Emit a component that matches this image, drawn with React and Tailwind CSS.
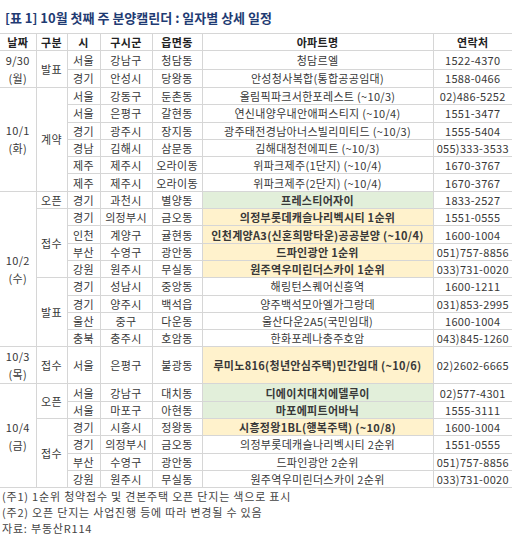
const groups = [
  {
    date: "9/30",
    day: "(월)",
    parts: [
      {
        kind: "발표",
        rows: [
          ["서울", "강남구", "청담동", "청담르엘", "1522-4370"],
          ["경기", "안성시", "당왕동", "안성청사복합(통합공공임대)", "1588-0466"],
        ],
      },
    ],
  },
  {
    date: "10/1",
    day: "(화)",
    parts: [
      {
        kind: "계약",
        rows: [
          ["서울", "강동구", "둔촌동", "올림픽파크서한포레스트 (~10/3)", "02)486-5252"],
          ["서울", "은평구", "갈현동", "연신내양우내안애퍼스티지 (~10/4)", "1551-3477"],
          ["경기", "광주시", "장지동", "광주태전경남아너스빌리미티드 (~10/3)", "1555-5404"],
          ["경남", "김해시", "삼문동", "김해대청천에피트 (~10/3)", "055)333-3533"],
          ["제주", "제주시", "오라이동", "위파크제주(1단지) (~10/4)", "1670-3767"],
          ["제주", "제주시", "오라이동", "위파크제주(2단지) (~10/4)", "1670-3767"],
        ],
      },
    ],
  },
  {
    date: "10/2",
    day: "(수)",
    parts: [
      {
        kind: "오픈",
        rows: [["경기", "과천시", "별양동", "프레스티어자이", "1833-2527", "green"]],
      },
      {
        kind: "접수",
        rows: [
          ["경기", "의정부시", "금오동", "의정부롯데캐슬나리벡시티 1순위", "1551-0555", "yellow"],
          ["인천", "계양구", "귤현동", "인천계양A3(신혼희망타운)공공분양 (~10/4)", "1600-1004", "yellow"],
          ["부산", "수영구", "광안동", "드파인광안 1순위", "051)757-8856", "yellow"],
          ["강원", "원주시", "무실동", "원주역우미린더스카이 1순위", "033)731-0020", "yellow"],
        ],
      },
      {
        kind: "발표",
        rows: [
          ["경기", "성남시", "중앙동", "해링턴스퀘어신흥역", "1600-1211"],
          ["경기", "양주시", "백석읍", "양주백석모아엘가그랑데", "031)853-2995"],
          ["울산", "중구", "다운동", "울산다운2A5(국민임대)", "1600-1004"],
          ["충북", "충주시", "호암동", "한화포레나충주호암", "043)845-1260"],
        ],
      },
    ],
  },
  {
    date: "10/3",
    day: "(목)",
    tall: true,
    parts: [
      {
        kind: "접수",
        rows: [["서울", "은평구", "불광동", "루미노816(청년안심주택)민간임대 (~10/6)", "02)2602-6665", "yellow"]],
      },
    ],
  },
  {
    date: "10/4",
    day: "(금)",
    parts: [
      {
        kind: "오픈",
        rows: [
          ["서울", "강남구", "대치동", "디에이치대치에델루이", "02)577-4301", "green"],
          ["서울", "마포구", "아현동", "마포에피트어바닉", "1555-3111", "green"],
        ],
      },
      {
        kind: "접수",
        rows: [
          ["경기", "시흥시", "정왕동", "시흥정왕1BL(행복주택) (~10/8)", "1600-1004", "yellow"],
          ["경기", "의정부시", "금오동", "의정부롯데캐슬나리벡시티 2순위", "1551-0555"],
          ["부산", "수영구", "광안동", "드파인광안 2순위", "051)757-8856"],
          ["강원", "원주시", "무실동", "원주역우미린더스카이 2순위", "033)731-0020"],
        ],
      },
    ],
  },
];

const cell = "border border-[#d6d6d6] text-center align-middle p-0";

function App() {
  return (
    <div
      className="w-[512px] h-[539px] bg-white text-[#383838] overflow-hidden"
      style={{ fontFamily: '"Noto Sans CJK KR", "Noto Sans", sans-serif' }}
    >
      <div className="h-[33px] flex items-center pl-[5px] pt-[2px] text-[13px] font-bold text-[#1f3b73]">
        [표 1] 10월 첫째 주 분양캘린더 : 일자별 상세 일정
      </div>
      <table className="w-[512px] table-fixed border-collapse text-[11px] leading-[14px] tracking-[0.3px]">
        <colgroup>
          <col className="w-[36px]" />
          <col className="w-[31px]" />
          <col className="w-[33px]" />
          <col className="w-[52px]" />
          <col className="w-[50px]" />
          <col className="w-[231px]" />
          <col className="w-[79px]" />
        </colgroup>
        <thead>
          <tr className="h-[17px] font-bold text-[#222]">
            <th className={cell + " border-l-0"}>날짜</th>
            <th className={cell}>구분</th>
            <th className={cell}>시</th>
            <th className={cell}>구시군</th>
            <th className={cell}>읍면동</th>
            <th className={cell}>아파트명</th>
            <th className={cell + " border-r-0"}>연락처</th>
          </tr>
        </thead>
        <tbody>
          {groups.map((g) => {
            const total = g.parts.reduce((n, p) => n + p.rows.length, 0);
            return g.parts.map((p, pi) =>
              p.rows.map((r, ri) => {
                const first = pi === 0 && ri === 0;
                const bg =
                  r[5] === "green" ? "bg-[#e2efda] font-bold" : r[5] === "yellow" ? "bg-[#fff2cc] font-bold" : "";
                return (
                  <tr
                    key={g.date + pi + ri}
                    className={(g.tall ? "h-[33px] " : "h-[17.3px] ") + (first ? "border-t border-t-[#b5b5b5]" : "")}
                  >
                    {first && (
                      <td rowSpan={total} className={cell + " border-l-0 leading-[18px]"}>
                        {g.date}
                        <br />
                        {g.day}
                      </td>
                    )}
                    {ri === 0 && (
                      <td rowSpan={p.rows.length} className={cell}>
                        {p.kind}
                      </td>
                    )}
                    <td className={cell}>{r[0]}</td>
                    <td className={cell}>{r[1]}</td>
                    <td className={cell}>{r[2]}</td>
                    <td className={cell + " whitespace-nowrap " + bg}>{r[3]}</td>
                    <td className={cell + " border-r-0"}>{r[4]}</td>
                  </tr>
                );
              })
            );
          })}
        </tbody>
      </table>
      <div className="text-[11px] leading-[16px] tracking-[0.8px] text-[#444] pl-[2px]">
        <p>(주1) 1순위 청약접수 및 견본주택 오픈 단지는 색으로 표시</p>
        <p>(주2) 오픈 단지는 사업진행 등에 따라 변경될 수 있음</p>
        <p>자료: 부동산R114</p>
      </div>
    </div>
  );
}

export default App;
